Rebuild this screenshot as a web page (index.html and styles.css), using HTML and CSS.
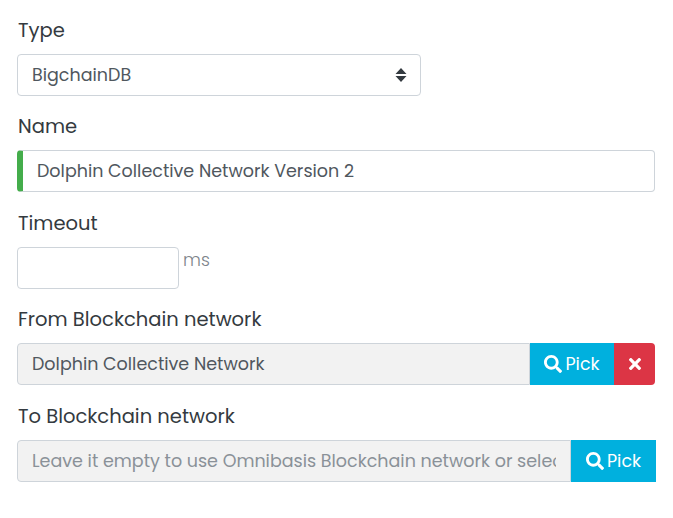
FILE: index.html
```html
<!DOCTYPE html>
<html lang="en">
<head>
<meta charset="utf-8">
<title>Form</title>
<link rel="stylesheet" href="styles.css">
</head>
<body>
<form class="form">
  <div class="group">
    <label class="label">Type</label>
    <div class="select">
      <span>BigchainDB</span>
      <svg width="12" height="14" viewBox="0 0 12 14"><path d="M6 0 11.5 6H.5zM.5 8h11L6 14z" fill="#343a40"/></svg>
    </div>
  </div>
  <div class="group">
    <label class="label">Name</label>
    <div class="input valid">Dolphin Collective Network Version 2</div>
  </div>
  <div class="group">
    <label class="label">Timeout</label>
    <div class="timeout"><div class="input short"></div><span class="unit">ms</span></div>
  </div>
  <div class="group">
    <label class="label">From Blockchain network</label>
    <div class="picker">
      <div class="input readonly"><span class="clip">Dolphin Collective Network</span></div>
      <button type="button" class="btn pick"><svg class="icon" width="18" height="18" viewBox="0 0 512 512"><path fill="#fff" d="M505 442.7L405.3 343c-4.5-4.5-10.6-7-17-7H372c27.6-35.3 44-79.7 44-128C416 93.1 322.9 0 208 0S0 93.1 0 208s93.1 208 208 208c48.3 0 92.7-16.4 128-44v16.3c0 6.4 2.5 12.5 7 17l99.7 99.7c9.4 9.4 24.6 9.4 33.9 0l28.3-28.3c9.4-9.4 9.4-24.6.1-34zM208 336c-70.7 0-128-57.2-128-128 0-70.7 57.2-128 128-128 70.7 0 128 57.2 128 128 0 70.7-57.2 128-128 128z"/></svg>Pick</button>
      <button type="button" class="btn del"><svg width="12" height="18" viewBox="0 0 352 512"><path fill="#fff" d="M242.72 256l100.07-100.07c12.28-12.28 12.28-32.19 0-44.48l-22.24-22.24c-12.28-12.28-32.19-12.28-44.48 0L176 189.28 75.93 89.21c-12.28-12.28-32.19-12.28-44.48 0L9.21 111.45c-12.28 12.28-12.28 32.19 0 44.48L109.28 256 9.21 356.07c-12.28 12.28-12.28 32.19 0 44.48l22.24 22.24c12.28 12.28 32.2 12.28 44.48 0L176 322.72l100.07 100.07c12.28 12.28 32.2 12.28 44.48 0l22.24-22.24c12.28-12.28 12.28-32.19 0-44.48L242.72 256z"/></svg></button>
    </div>
  </div>
  <div class="group">
    <label class="label">To Blockchain network</label>
    <div class="picker wide">
      <div class="input readonly placeholder"><span class="clip">Leave it empty to use Omnibasis Blockchain network or select one</span></div>
      <button type="button" class="btn pick"><svg class="icon" width="18" height="18" viewBox="0 0 512 512"><path fill="#fff" d="M505 442.7L405.3 343c-4.5-4.5-10.6-7-17-7H372c27.6-35.3 44-79.7 44-128C416 93.1 322.9 0 208 0S0 93.1 0 208s93.1 208 208 208c48.3 0 92.7-16.4 128-44v16.3c0 6.4 2.5 12.5 7 17l99.7 99.7c9.4 9.4 24.6 9.4 33.9 0l28.3-28.3c9.4-9.4 9.4-24.6.1-34zM208 336c-70.7 0-128-57.2-128-128 0-70.7 57.2-128 128-128 70.7 0 128 57.2 128 128 0 70.7-57.2 128-128 128z"/></svg>Pick</button>
    </div>
  </div>
</form>
</body>
</html>
```
FILE: styles.css
```css
* { box-sizing: border-box; }
body { margin: 0; background: #fff; font-family: Poppins, "Open Sans", "Noto Sans", sans-serif; font-size: 17.5px; color: #50575e; }
.form { padding: 17.9px 18px 0 17px; width: 673px; }
.group { margin-bottom: 18.5px; }
.label { display: block; height: 24px; margin-bottom: 12px; padding: 0.75px 0 0 1px; line-height: 24px; font-size: 19.5px; color: #343a40; }
.select, .input { height: 42px; border: 1px solid #ced4da; line-height: 40px; padding: 0 14px; background: #fff; white-space: nowrap; overflow: hidden; }
.select { width: 404px; border-radius: 4px; display: flex; align-items: center; justify-content: space-between; padding-right: 13px; }
.input { width: 638px; border-radius: 4px; flex: none; }
.valid { border-left: 6px solid #44ad4b; padding-left: 14px; }
.timeout { display: flex; }
.short { width: 162px; }
.unit { margin-left: 4px; line-height: 26px; color: #7d848b; font-weight: 300; }
.picker { display: flex; width: 638px; }
.wide { width: 639px; }
.picker .input { flex: 1 1 0; min-width: 0; width: auto; border-radius: 4px 0 0 4px; background: #f2f2f2; }
.clip { display: block; overflow: hidden; }
.placeholder { color: #8a9198; }
.btn { height: 42px; border: 0; padding: 0; color: #fff; font: inherit; display: flex; align-items: center; justify-content: center; flex: none; }
.pick { width: 84px; background: #00b0de; }
.wide .pick { width: 85px; }
.del { width: 41px; background: #dc3545; border-radius: 0 4px 4px 0; }
.icon { margin-right: 3px; }
```
